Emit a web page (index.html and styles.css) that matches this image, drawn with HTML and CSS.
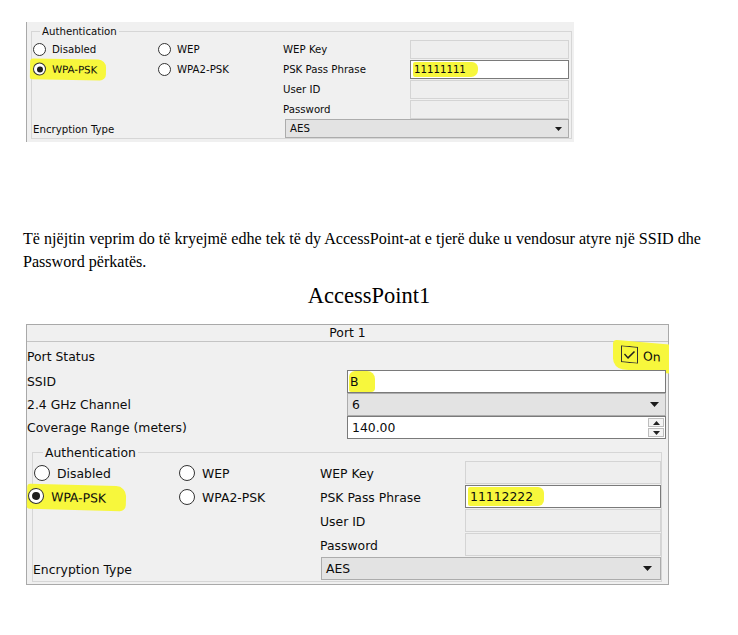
FILE: index.html
```html
<!DOCTYPE html>
<html>
<head>
<meta charset="utf-8">
<link rel="stylesheet" href="styles.css">
</head>
<body>
<section class="shot-top">
  <fieldset class="grp grp-s">
    <legend>Authentication</legend>
    <div class="agrid agrid-s">
      <label class="radio"><span class="rb"></span>Disabled</label>
      <label class="radio"><span class="rb"></span>WEP</label>
      <span class="lbl">WEP Key</span>
      <span class="inp dis"></span>

      <label class="radio hl hl-wpa-s"><span class="rb on"></span>WPA-PSK</label>
      <label class="radio"><span class="rb"></span>WPA2-PSK</label>
      <span class="lbl">PSK Pass Phrase</span>
      <span class="inp act"><span class="hl hl-pass-s">11111111</span></span>

      <span class="lbl c3">User ID</span>
      <span class="inp dis"></span>

      <span class="lbl c3">Password</span>
      <span class="inp dis"></span>

      <span class="lbl c12">Encryption Type</span>
      <span class="sel c34">AES<svg class="arrow" width="7" height="4" viewBox="0 0 7 4"><path d="M0 0h7L3.5 4z"/></svg></span>
    </div>
  </fieldset>
</section>

<p class="para">Të njëjtin veprim do të kryejmë edhe tek të dy AccessPoint-at e tjerë duke u vendosur atyre një SSID dhe Password përkatës.</p>
<p class="caption">AccessPoint1</p>

<section class="panel">
  <div class="panel-head">Port 1</div>
  <div class="panel-body">
    <div class="prow prow-status">
      <span class="lbl">Port Status</span>
      <span class="hl hl-on"><label class="chk"><svg width="17" height="17" viewBox="0 0 17 17"><rect x="0.5" y="0.5" width="16" height="16" fill="none" stroke="#333"/><path d="M3.5 8.5l3.5 3.5 6.5-7" fill="none" stroke="#222" stroke-width="1.4"/></svg>On</label></span>
    </div>
    <div class="prow">
      <span class="lbl">SSID</span>
      <span class="inp act"><span class="hl hl-b">B</span></span>
    </div>
    <div class="prow">
      <span class="lbl">2.4 GHz Channel</span>
      <span class="sel">6<svg class="arrow" width="9" height="5" viewBox="0 0 9 5"><path d="M0 0h9L4.5 5z"/></svg></span>
    </div>
    <div class="prow">
      <span class="lbl">Coverage Range (meters)</span>
      <span class="inp act spin">140.00
        <span class="spinbtns">
          <span class="sb"><svg width="7" height="4" viewBox="0 0 7 4"><path d="M0 4h7L3.5 0z"/></svg></span>
          <span class="sb"><svg width="7" height="4" viewBox="0 0 7 4"><path d="M0 0h7L3.5 4z"/></svg></span>
        </span>
      </span>
    </div>

    <fieldset class="grp grp-l">
      <legend>Authentication</legend>
      <div class="agrid agrid-l">
        <label class="radio"><span class="rb"></span>Disabled</label>
        <label class="radio"><span class="rb"></span>WEP</label>
        <span class="lbl">WEP Key</span>
        <span class="inp dis"></span>

        <label class="radio hl hl-wpa-l"><span class="rb on"></span>WPA-PSK</label>
        <label class="radio"><span class="rb"></span>WPA2-PSK</label>
        <span class="lbl">PSK Pass Phrase</span>
        <span class="inp act"><span class="hl hl-pass-l">11112222</span></span>

        <span class="lbl c3">User ID</span>
        <span class="inp dis"></span>

        <span class="lbl c3">Password</span>
        <span class="inp dis"></span>

        <span class="lbl c12">Encryption Type</span>
        <span class="sel c34">AES<svg class="arrow" width="9" height="5" viewBox="0 0 9 5"><path d="M0 0h9L4.5 5z"/></svg></span>
      </div>
    </fieldset>
  </div>
</section>
</body>
</html>
```

FILE: styles.css
```css
* { box-sizing: border-box; }

body {
  margin: 0;
  background: #fff;
  font-family: "DejaVu Sans", Verdana, sans-serif;
  color: #0c0c0c;
}

/* ---------- shared widgets ---------- */
.grp {
  margin: 0;
  min-width: 0;
  border: 1px solid #d6d6d6;
}

.agrid {
  display: grid;
  align-items: center;
}

.c3 { grid-column: 3; }
.c12 { grid-column: 1 / 3; }
.c34 { grid-column: 3 / 5; }

.radio {
  display: flex;
  align-items: center;
  white-space: nowrap;
}

.rb {
  flex: none;
  border: 1px solid #333;
  border-radius: 50%;
  background: #fff;
  display: flex;
  align-items: center;
  justify-content: center;
}

.rb.on::after {
  content: "";
  border-radius: 50%;
  background: #1e1e1e;
}

.inp {
  display: flex;
  align-items: center;
  align-self: start;
  position: relative;
}

.inp.dis {
  background: #eeeeee;
  border: 1px solid #d4d4d4;
}

.inp.act {
  background: #fff;
  border: 1px solid #7a7a7a;
}

.sel {
  display: flex;
  align-items: center;
  justify-content: space-between;
  background: #e3e3e3;
  border: 1px solid #acacac;
  align-self: start;
}

.arrow { fill: #1a1a1a; flex: none; }

.hl {
  background: #f7f73c;
}

/* ---------- top (small) screenshot ---------- */
.shot-top {
  margin: 22px 0 0 26px;
  width: 548px;
  height: 120px;
  background: #f0f0f0;
  border-left: 1px solid #a9a9a9;
  padding: 3px 2px 0 4px;
  font-size: 10.2px;
}

.grp-s { padding: 1px 0 0 1px; height: 114px; }

.grp-s legend {
  margin-left: 7px;
  padding: 0 2px;
  line-height: 13px;
}

.agrid-s {
  grid-template-columns: 125px 125px 127px 159px;
  grid-auto-rows: 20px;
}

.agrid-s .radio { gap: 6px; }
.agrid-s .rb { width: 13px; height: 13px; }
.agrid-s .rb.on::after { width: 6px; height: 6px; }
.agrid-s .inp { height: 19px; margin-top: 1px; padding-left: 2px; }
.agrid-s .sel { height: 19px; margin: 0 0 0 2px; padding: 0 6px 0 4px; }

.hl-wpa-s {
  justify-self: start;
  margin: 0 0 0 -3px;
  padding: 4px 9px 4px 3px;
  border-radius: 3px 8px 6px 2px;
  transform: rotate(1deg);
}

.hl-pass-s {
  padding: 2px 12px 2px 1px;
  border-radius: 2px 6px 7px 2px;
}

/* ---------- text ---------- */
.para {
  margin: 85px 0 0 23px;
  width: 690px;
  font-family: "Liberation Serif", "Times New Roman", serif;
  font-size: 16.1px;
  line-height: 23px;
  color: #000;
}

.caption {
  margin: 11px 0 0 0;
  text-align: center;
  font-family: "Liberation Serif", "Times New Roman", serif;
  font-size: 22.5px;
  line-height: 24px;
  color: #000;
}

/* ---------- bottom (large) panel ---------- */
.panel {
  margin: 16px 0 0 26px;
  width: 643px;
  border: 1px solid #a9a9a9;
  background: #f0f0f0;
  font-size: 12.4px;
}

.panel-head {
  height: 17px;
  line-height: 16px;
  text-align: center;
  border-bottom: 1px solid #c4c4c4;
}

.panel-body { padding: 0 0 1px 0; }

.prow {
  display: grid;
  grid-template-columns: 320px 319px;
  align-items: center;
  height: 23px;
}

.prow-status {
  height: 28px;
  display: flex;
  justify-content: space-between;
}

.prow .inp, .prow .sel { height: 23px; padding-left: 4px; }
.prow .sel { padding-right: 6px; }

.chk {
  display: flex;
  align-items: center;
  gap: 5px;
}

.hl-on {
  padding: 5px 8px 7px 8px;
  margin-right: -1px;
  border-radius: 4px 0 0 10px;
  transform: skewY(5deg);
}

.hl-b {
  padding: 3px 16px 3px 1px;
  margin-left: -3px;
  border-radius: 6px 8px 4px 2px;
}

.spin { justify-content: space-between; padding-right: 1px; }

.spinbtns {
  display: flex;
  flex-direction: column;
  gap: 1px;
}

.sb {
  width: 16px;
  height: 9px;
  border: 1px solid #bdbdbd;
  background: #f4f4f4;
  display: flex;
  align-items: center;
  justify-content: center;
  fill: #222;
}

.grp-l {
  margin: 6px 6px 1px 5px;
  padding: 1px 0 0 0;
}

.grp-l legend {
  margin-left: 10px;
  padding: 0 2px;
  line-height: 15px;
}

.agrid-l {
  grid-template-columns: 145px 142px 145px 196px;
  grid-auto-rows: 24px;
}

.agrid-l .radio { gap: 7px; padding-left: 1px; }
.agrid-l .rb { width: 16px; height: 16px; }
.agrid-l .rb.on::after { width: 8px; height: 8px; }
.agrid-l .inp { height: 23px; padding-left: 3px; }
.agrid-l .sel { height: 23px; margin-left: 1px; padding: 0 8px 0 4px; }

.hl-wpa-l {
  justify-self: start;
  margin-left: -6px;
  padding: 4px 20px 5px 6px;
  border-radius: 3px 10px 6px 3px;
  transform: rotate(1.5deg);
}

.hl-pass-l {
  padding: 2px 11px 2px 2px;
  margin-left: -1px;
  border-radius: 2px 6px 6px 2px;
}
```
